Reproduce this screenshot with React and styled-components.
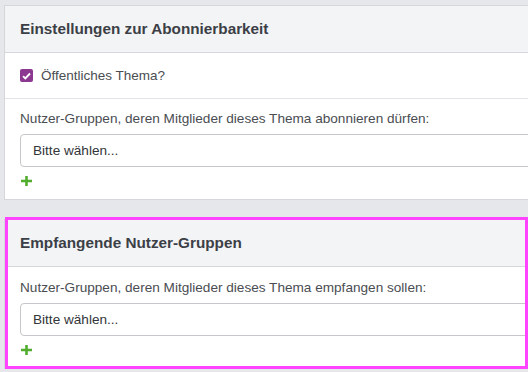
import React from 'react'
import styled, { createGlobalStyle } from 'styled-components'

const GlobalStyle = createGlobalStyle`
  html, body {
    margin: 0;
    padding: 0;
    background: #e6e7ea;
    overflow: hidden;
  }
  body {
    font-family: "Liberation Sans", Arial, sans-serif;
  }
`

const Page = styled.div`
  width: 528px;
  height: 372px;
  padding: 5px 0 0 4px;
  box-sizing: border-box;
  overflow: hidden;
`

const Card = styled.div`
  width: 600px;
  background: #ffffff;
  border: 1px solid #d5d7db;
  box-sizing: border-box;
`

// magenta frame painted over the second card
const Highlight = styled.div`
  position: relative;
  margin-top: 17px;
  width: 524px;
  height: 152px;
  padding-top: 2px;
  box-sizing: border-box;
  overflow: hidden;

  &::after {
    content: '';
    position: absolute;
    top: 0;
    left: 1px;
    right: 0;
    bottom: 0;
    border: 3px solid #ff44ff;
    pointer-events: none;
  }
`

const CardHeader = styled.div`
  height: 46px;
  display: flex;
  align-items: center;
  padding-left: 15px;
  background: #f3f4f6;
  border-bottom: 1px solid #d5d7db;
  font-size: 15.3px;
  font-weight: bold;
  color: #3c3f46;
`

const CheckRow = styled.label`
  height: 45px;
  display: flex;
  align-items: center;
  gap: 8px;
  padding-left: 15px;
  border-bottom: 1px solid #e3e4e7;
  font-size: 13.5px;
  color: #4a4d52;
`

const Check = styled.span`
  width: 13px;
  height: 13px;
  border-radius: 2px;
  background: #8c3790;
  display: flex;
  align-items: center;
  justify-content: center;
`

const Section = styled.div`
  padding: ${(p) => p.$top}px 0 ${(p) => p.$bottom}px 15px;
`

const Label = styled.div`
  font-size: 13.6px;
  line-height: 16px;
  color: #4a4d52;
`

const Select = styled.div`
  margin-top: 7px;
  height: 33px;
  box-sizing: border-box;
  border: 1px solid #c6c7ca;
  border-radius: 4px;
  display: flex;
  align-items: center;
  padding-left: 12px;
  font-size: 13.6px;
  color: #333539;
`

const AddButton = styled.div`
  margin-top: 9px;
  width: 11px;
  height: 10px;
  margin-left: 1px;
  display: flex;
`

const Plus = () => (
  <svg width="11" height="10" viewBox="0 0 11 10">
    <path d="M4.2 0h2.6v3.7H11v2.6H6.8V10H4.2V6.3H0V3.7h4.2z" fill="#52ad2f" />
  </svg>
)

const GroupPicker = ({ label, top, bottom }) => (
  <Section $top={top} $bottom={bottom}>
    <Label>{label}</Label>
    <Select>Bitte wählen...</Select>
    <AddButton>
      <Plus />
    </AddButton>
  </Section>
)

const App = () => {
  return (
    <>
      <GlobalStyle />
      <Page>
        <Card>
          <CardHeader>Einstellungen zur Abonnierbarkeit</CardHeader>
          <CheckRow>
            <Check>
              <svg width="9" height="8" viewBox="0 0 9 8">
                <path d="M1 4.2l2.3 2.3L8 1.5" stroke="#fff" strokeWidth="1.9" fill="none" />
              </svg>
            </Check>
            Öffentliches Thema?
          </CheckRow>
          <GroupPicker
            label="Nutzer-Gruppen, deren Mitglieder dieses Thema abonnieren dürfen:"
            top={12}
            bottom={13}
          />
        </Card>
        <Highlight>
          <Card>
            <CardHeader>Empfangende Nutzer-Gruppen</CardHeader>
            <GroupPicker
              label="Nutzer-Gruppen, deren Mitglieder dieses Thema empfangen sollen:"
              top={13}
              bottom={13}
            />
          </Card>
        </Highlight>
      </Page>
    </>
  )
}

export default App
